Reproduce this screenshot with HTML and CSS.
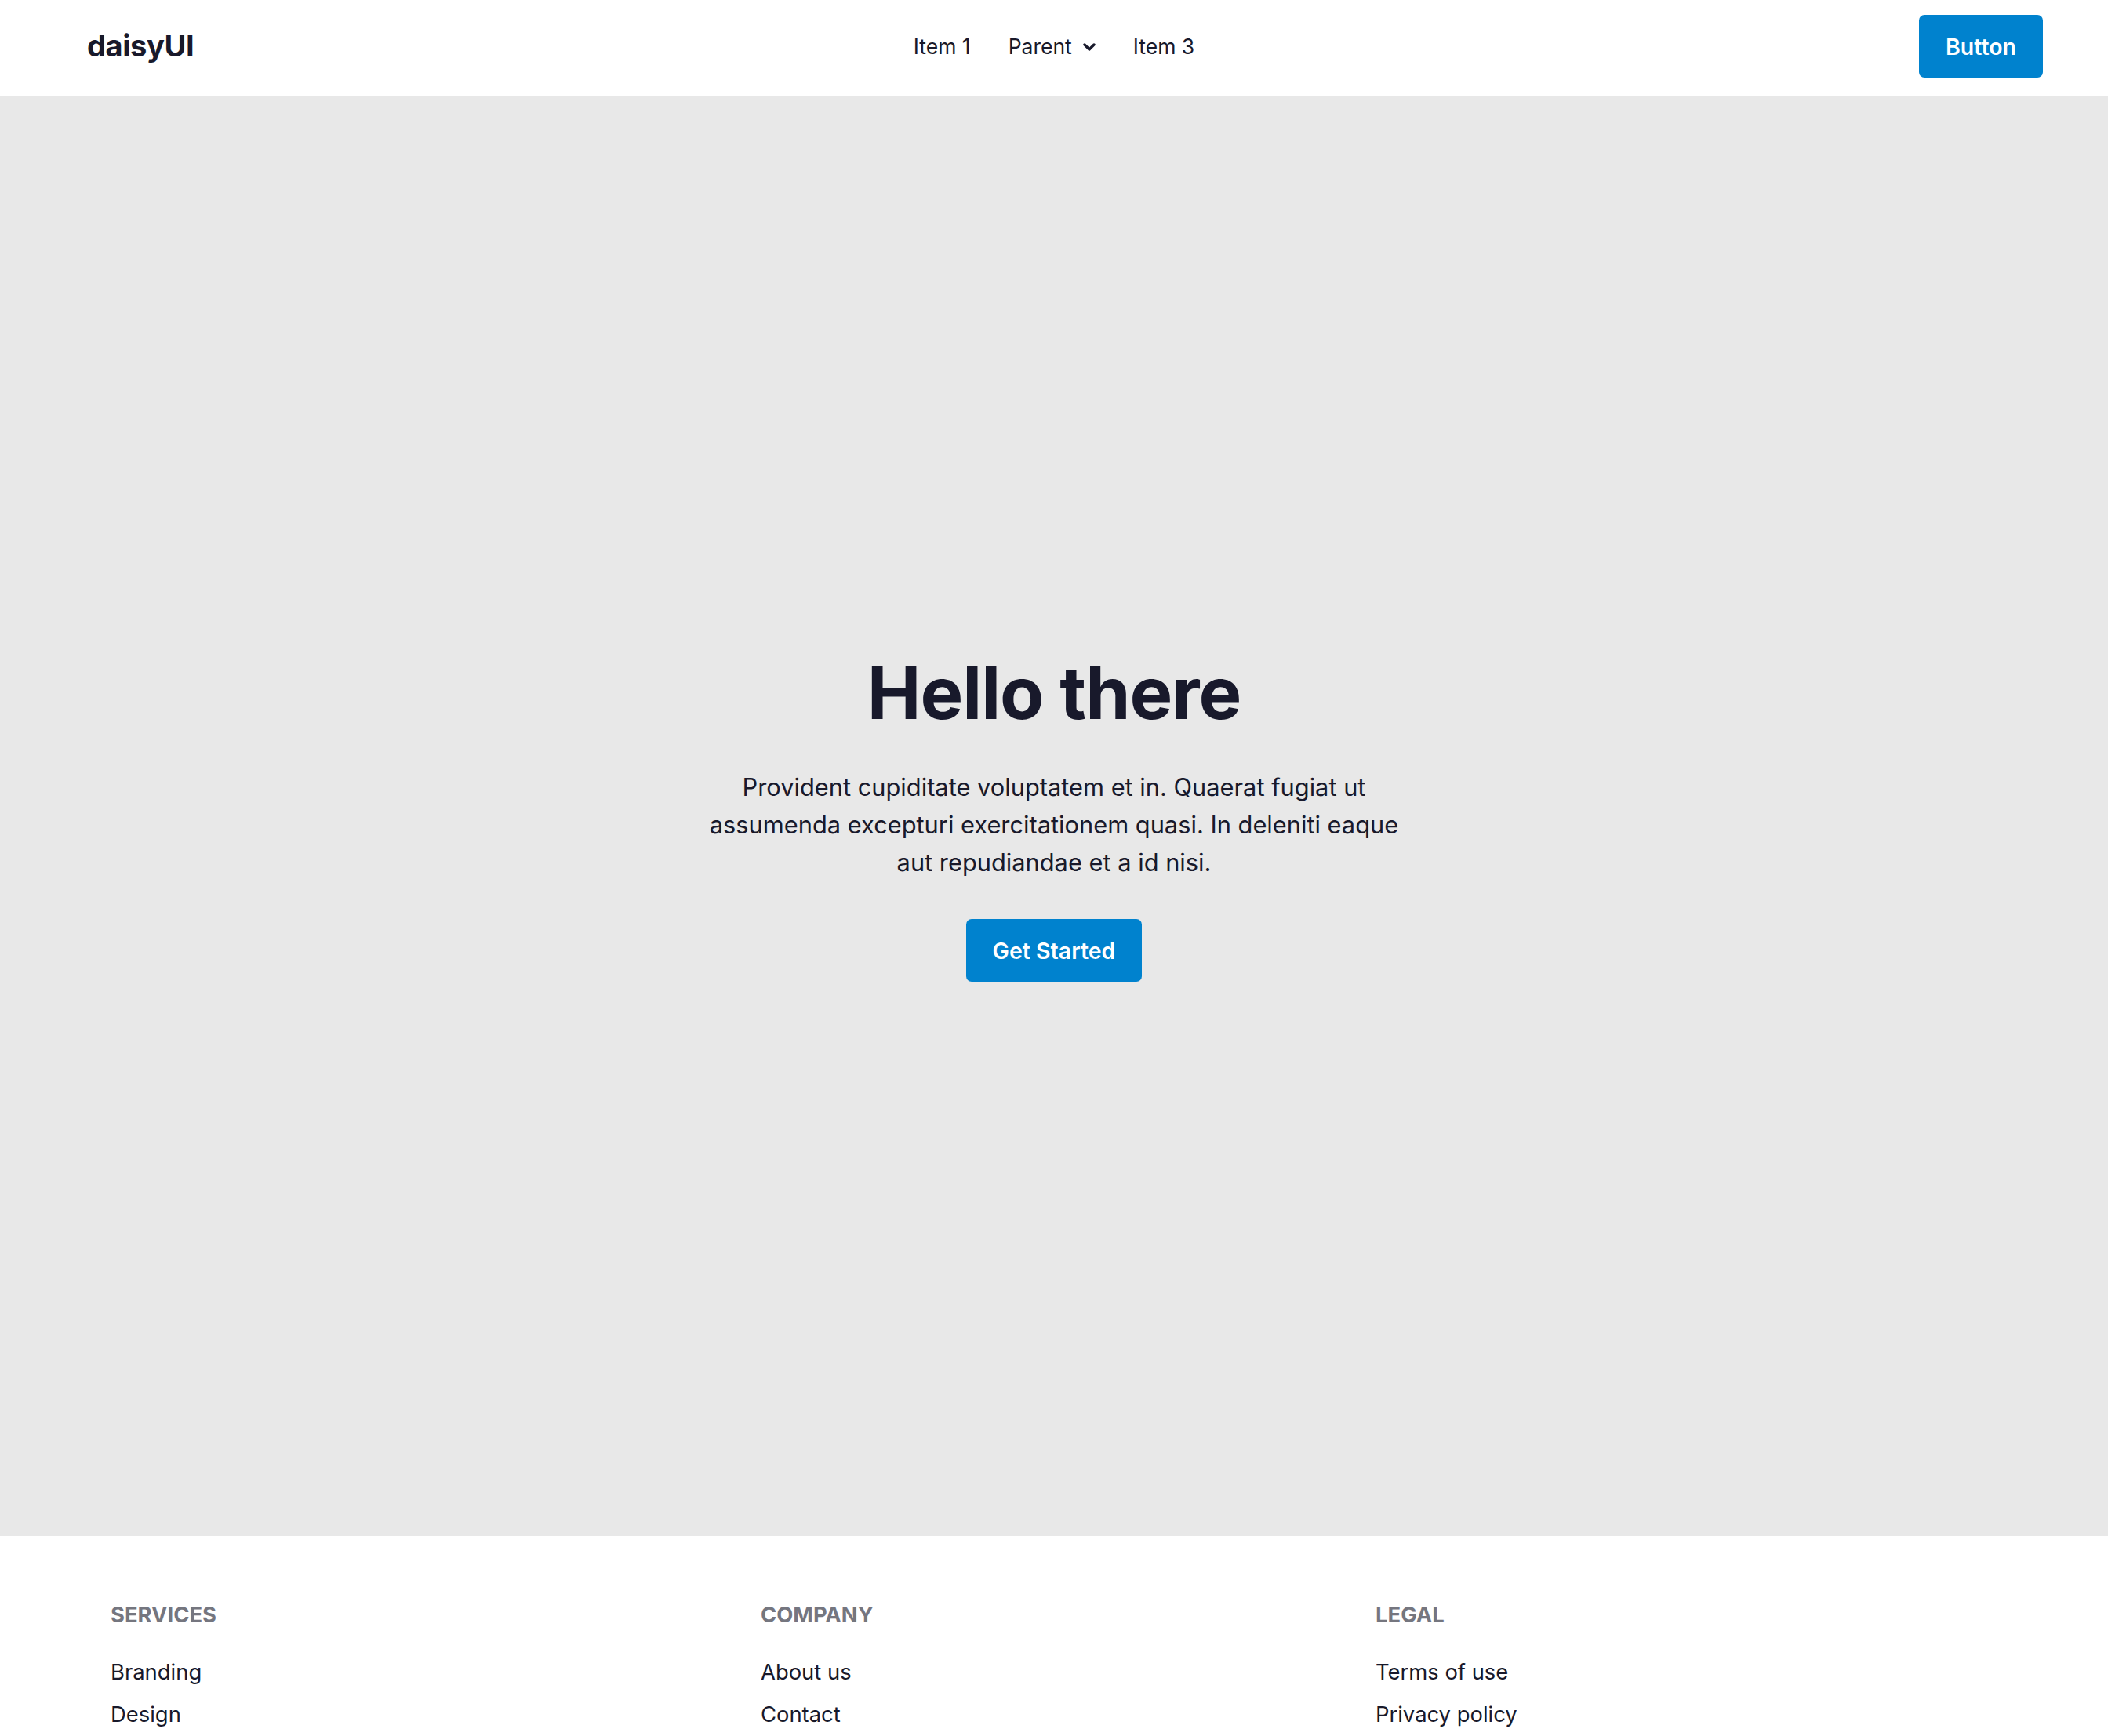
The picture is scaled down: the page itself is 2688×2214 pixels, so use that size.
FILE: index.html
```html
<!DOCTYPE html>
<html lang="en">
<head>
  <meta charset="UTF-8">
  <meta name="viewport" content="width=device-width, initial-scale=1.0">
  <title>daisyUI</title>
  <link rel="stylesheet" href="styles.css">
</head>
<body>

  <!-- Barra de navegación -->
  <header class="navbar">
    <div class="navbar-start">
      <a class="logo" href="#">daisyUI</a>
    </div>
    <nav class="navbar-center">
      <ul class="menu">
        <li><a href="#">Item 1</a></li>
        <li>
          <a href="#" class="parent">Parent
            <svg class="chevron" viewBox="0 0 16 10" width="16" height="10" aria-hidden="true">
              <polyline points="2,2 8,8 14,2" fill="none" stroke="currentColor" stroke-width="3.4" stroke-linecap="round" stroke-linejoin="round"/>
            </svg>
          </a>
        </li>
        <li><a href="#">Item 3</a></li>
      </ul>
    </nav>
    <div class="navbar-end">
      <a class="btn" href="#">Button</a>
    </div>
  </header>

  <!-- Hero -->
  <main class="hero">
    <div class="hero-content">
      <h1>Hello there</h1>
      <p>Provident cupiditate voluptatem et in. Quaerat fugiat ut assumenda excepturi exercitationem quasi. In deleniti eaque aut repudiandae et a id nisi.</p>
      <a class="btn" href="#">Get Started</a>
    </div>
  </main>

  <!-- Pie de página -->
  <footer class="footer">
    <div class="footer-col">
      <h6 class="footer-title">Services</h6>
      <a href="#">Branding</a>
      <a href="#">Design</a>
      <a href="#">Marketing</a>
      <a href="#">Advertisement</a>
    </div>
    <div class="footer-col">
      <h6 class="footer-title">Company</h6>
      <a href="#">About us</a>
      <a href="#">Contact</a>
      <a href="#">Jobs</a>
      <a href="#">Press kit</a>
    </div>
    <div class="footer-col">
      <h6 class="footer-title">Legal</h6>
      <a href="#">Terms of use</a>
      <a href="#">Privacy policy</a>
      <a href="#">Cookie policy</a>
    </div>
  </footer>

</body>
</html>
```

FILE: styles.css
```css
/* Base */
body {
  margin: 0;
  font-family: Inter, "Noto Sans", sans-serif;
  background-color: #ffffff;
  color: #18192b;
}

a {
  color: inherit;
  text-decoration: none;
}

/* Navbar */
.navbar {
  display: flex;
  align-items: center;
  height: 123px;
  padding: 0 83px 5px;
  box-sizing: border-box;
  background-color: #ffffff;
}

.navbar-start,
.navbar-end {
  display: flex;
  width: 50%;
}

.navbar-end {
  justify-content: flex-end;
}

.navbar-center {
  flex-shrink: 0;
}

.logo {
  padding: 0 0 2px 28px;
  font-size: 38px;
  font-weight: 700;
  letter-spacing: -0.4px;
}

.menu {
  display: flex;
  align-items: center;
  list-style: none;
  margin: 0;
  padding: 0;
}

.menu a {
  display: flex;
  align-items: center;
  padding: 6px 24px 6px;
  font-size: 26.5px;
}

.parent .chevron {
  margin-left: 14px;
  margin-top: 2px;
}

/* Buttons */
.btn {
  display: inline-flex;
  align-items: center;
  justify-content: center;
  height: 80px;
  padding: 0 34px;
  box-sizing: border-box;
  font-size: 28.5px;
  font-weight: 600;
  color: #ffffff;
  background-color: #0082ce;
  border-radius: 7px;
}

/* Hero */
.hero {
  display: flex;
  align-items: center;
  justify-content: center;
  height: 1836px;
  padding-top: 8px;
  box-sizing: border-box;
  background-color: #e8e8e8;
}

.hero-content {
  display: flex;
  flex-direction: column;
  align-items: center;
  text-align: center;
  max-width: 900px;
}

.hero h1 {
  margin: 0;
  font-size: 92px;
  font-weight: 700;
  line-height: 1;
  letter-spacing: -1px;
}

.hero p {
  margin: 50px 0 48px;
  font-size: 30.8px;
  line-height: 48px;
}

/* Footer */
.footer {
  display: grid;
  grid-template-columns: 829px 784px 1fr;
  padding: 80px 0 80px 141px;
  background-color: #ffffff;
}

.footer-col {
  display: flex;
  flex-direction: column;
  align-items: flex-start;
  gap: 13px;
}

.footer-col a {
  font-size: 27.4px;
  line-height: 41px;
}

.footer-title {
  margin: 0 0 19px;
  font-size: 27.4px;
  line-height: 41px;
  font-weight: 700;
  text-transform: uppercase;
  color: #75767f;
}
```
